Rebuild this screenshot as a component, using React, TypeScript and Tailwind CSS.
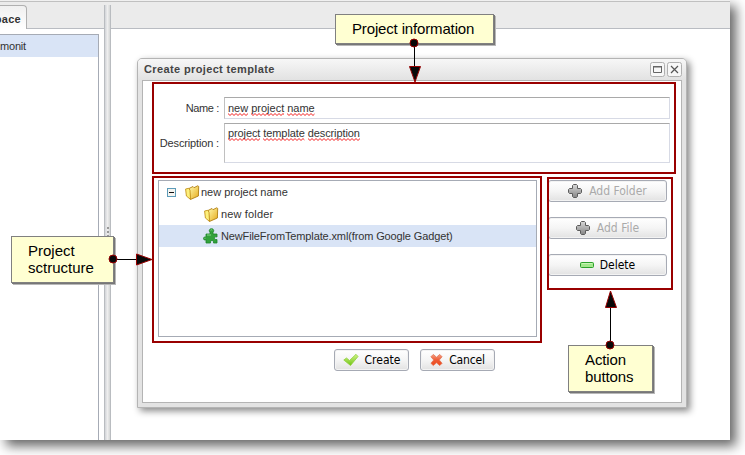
import type { ReactNode } from "react";

const PlusIcon = () => (
  <svg width="14" height="14" viewBox="0 0 14 14">
    <defs>
      <linearGradient id="plus" x1="0" y1="0" x2="0" y2="1">
        <stop offset="0" stopColor="#d8d8d8" />
        <stop offset="1" stopColor="#858585" />
      </linearGradient>
    </defs>
    <path d="M5.500 .5h3l1 1v3h3l1 1v3l-1 1h-3v3l-1 1h-3l-1-1v-3h-3l-1-1v-3l1-1h3v-3z" fill="url(#plus)" stroke="#5c5c5c" />
  </svg>
);

const MinusIcon = () => (
  <svg width="14" height="6" viewBox="0 0 14 6">
    <rect x=".5" y=".5" width="13" height="5" rx="1" fill="#a2e88c" stroke="#2ba12b" />
    <path d="M2 1.500h10" stroke="#c9f5b8" />
  </svg>
);

const CheckIcon = () => (
  <svg width="16" height="14" viewBox="0 0 16 14">
    <defs>
      <linearGradient id="check" x1="0" y1="0" x2="0" y2="1">
        <stop offset="0" stopColor="#d3f58a" />
        <stop offset="1" stopColor="#6fc414" />
      </linearGradient>
    </defs>
    <path d="M.8 7 3.500 5 6.500 7.500 13 1.300 15 3.500 7.500 12.500z" fill="url(#check)" stroke="#8fcf3a" strokeWidth=".8" strokeLinejoin="round" />
  </svg>
);

const CrossIcon = () => (
  <svg width="13" height="14" viewBox="0 0 14 14">
    <defs>
      <linearGradient id="cross" x1="0" y1="0" x2="0" y2="1">
        <stop offset="0" stopColor="#f6a083" />
        <stop offset=".5" stopColor="#ee5b35" />
        <stop offset="1" stopColor="#ee4a1c" />
      </linearGradient>
    </defs>
    <path d="M1 3.500 3.500 1 7 4 10.500 1 13 3.500 10 7 13 10.500 10.500 13 7 10 3.500 13 1 10.500 4 7z" fill="url(#cross)" stroke="#e0704f" strokeWidth=".8" strokeLinejoin="round" />
  </svg>
);

const FolderIcon = () => (
  <svg width="15" height="15" viewBox="0 0 15 15">
    <defs>
      <linearGradient id="folder" x1="0" y1="0" x2="1" y2="1">
        <stop offset="0" stopColor="#fffbb0" />
        <stop offset="1" stopColor="#e6a91a" />
      </linearGradient>
    </defs>
    <path d="M4 3.500 8 1.500l1 1.200 3.700-1.900 1 .6-.3 9.600-8 3.500z" fill="url(#folder)" stroke="#b07f14" strokeWidth=".9" strokeLinejoin="round" />
    <path d="M.6 4 3.800 3.300 5 5.200l.5 9.200L1.400 11z" fill="#fdf07c" stroke="#c4931c" strokeWidth=".9" strokeLinejoin="round" />
  </svg>
);

const PuzzleIcon = () => (
  <svg width="16" height="16" viewBox="0 0 16 16">
    <path
      d="M7 4.500C5.500 2.500 6.500 .7 8.500 .7s3 1.800 1.500 3.800v1.500h4v3c-1.800-.7-2.500.2-2.500 1.200s.8 1.800 2.500 1.300V15h-3.500c.3-1.500-.3-2.500-1.500-2.500S7.200 13.500 7.500 15H3v-3.300c-1.500.8-2.500 0-2.500-1.200S1.500 8.500 3 9.200V6h4z"
      fill="#32a23c"
      stroke="#1d8429"
      strokeWidth=".8"
    />
    <path d="M7.500 2.200q1-.8 1.800 0M4 7h4M1.500 10.200h1" stroke="#8bd78c" fill="none" />
  </svg>
);

function Button({ icon, label, className = "" }: { icon: ReactNode; label: string; className?: string }) {
  return (
    <button
      className={`flex h-[22px] items-center justify-center rounded-[3px] border border-[#a6aab4] bg-linear-to-b from-white via-[#f5f5f5] to-[#e2e2e2] font-['DejaVu_Sans_Condensed','DejaVu_Sans',sans-serif] text-[12px] leading-none font-stretch-condensed shadow-[inset_0_0_0_1px_#f3f3f3] ${className}`}
    >
      {icon}
      <span className="whitespace-nowrap">{label}</span>
    </button>
  );
}

function TreeRow({ children, className }: { children: ReactNode; className: string }) {
  return <div className={`flex h-[22px] items-center whitespace-nowrap ${className}`}>{children}</div>;
}

function Callout({ children, className }: { children: ReactNode; className: string }) {
  return (
    <div
      className={`absolute border border-[#808080] bg-[#ffffd2] pt-[5px] pl-[16px] text-[15px] leading-[17px] whitespace-nowrap text-black shadow-[1px_1px_0_#777,2px_2px_0_#b8b8b8] ${className}`}
    >
      {children}
    </div>
  );
}

/* Text with a spell-checker zigzag below each word. */
function Misspelled({ text, className = "" }: { text: string; className?: string }) {
  return (
    <span className={`flex gap-[3px] ${className}`}>
      {text.split(" ").map((word) => (
        <span key={word} className="relative leading-[14px]">
          {word}
          <svg className="absolute bottom-[-1px] left-0 h-[3px] w-full">
            <defs>
              <pattern id="zigzag" width="4" height="3" patternUnits="userSpaceOnUse">
                <path d="M-1 1.500 0 .5l2 2 2-2 1 1" fill="none" stroke="#f00000" strokeWidth=".9" />
              </pattern>
            </defs>
            <rect width="100%" height="3" fill="url(#zigzag)" />
          </svg>
        </span>
      ))}
    </span>
  );
}

export default function App() {
  return (
    <div className="relative h-[455px] w-[745px] overflow-hidden bg-white font-['Liberation_Sans',Arial,sans-serif] text-[11px] text-[#333]">
      <div className="relative flex h-[440px] w-[730px] flex-col bg-[#ebebeb] shadow-[6px_6px_11px_#666]">
        <div className="h-[2px] shrink-0 border-b border-[#c0c0c0] bg-[#f0f0f0]" />
        <div className="flex min-h-0 flex-1 pt-[3px]">
          <div className="flex w-[104px] flex-col">
            <div className="flex h-[24px]">
              <div className="z-10 flex h-[24px] w-[27px] items-center justify-end rounded-tr-[4px] border-t border-r border-[#b0b0b0] bg-linear-to-b from-[#f0f0f0] to-white pt-[4px] pr-[5px] font-bold tracking-[0.3px]">
                pace
              </div>
              <div className="flex-1 border-b border-[#b9bcc2]" />
            </div>
            <div className="flex-1 bg-white pt-[5px] pr-[5px]">
              <div className="h-full border-t border-r border-[#a6abb5]">
                <div className="flex h-[22px] items-center bg-[#d9e4f6] tracking-[-0.2px]">monit</div>
              </div>
            </div>
          </div>
          <div className="flex w-[7px] flex-col items-center justify-center gap-[2px] border-x border-[#b9bcc0] bg-linear-to-r from-[#d2d4d8] via-[#eee] to-[#d4d6d6] pt-[19px]">
            <i className="size-[2px] bg-[#999]" />
            <i className="size-[2px] bg-[#999]" />
            <i className="size-[2px] bg-[#999]" />
          </div>
          <div className="flex flex-1 flex-col">
            <div className="h-[24px] border-b border-[#b9bcc2]" />
            <div className="flex-1 bg-white" />
          </div>
        </div>
      </div>

      <section className="absolute top-[58px] left-[137px] flex h-[350px] w-[550px] flex-col rounded-t-[5px] border border-[#b4b4b4] bg-[#e3e3e3] px-[4px] pb-[4px] shadow-[3px_3px_7px_#888]">
        <header className="-mx-[4px] flex h-[21px] shrink-0 items-center rounded-t-[4px] bg-linear-to-b from-[#f7f7f7] to-[#e2e2e2] pr-[4px] pl-[6px]">
          <h1 className="flex-1 text-[11px] font-bold tracking-[0.37px] text-[#444]">Create project template</h1>
          <svg width="32" height="15" viewBox="0 0 32 15" fill="none">
            <rect x=".5" y=".5" width="14" height="14" rx="2" fill="#f7f7f7" stroke="#b0b0b0" />
            <rect x="17.500" y=".5" width="14" height="14" rx="2" fill="#f7f7f7" stroke="#b0b0b0" />
            <path d="M3.500 4v6.500h8V4M3 4.500h9" stroke="#666" />
            <path d="M3 5h9" stroke="#666" />
            <path d="m21 4 7 7m0-7-7 7" stroke="#555" strokeWidth="1.200" />
          </svg>
        </header>
        <div className="flex min-h-0 flex-1 flex-col border border-[#b4b4b4] bg-white">
          <div className="grid grid-cols-[76px_446px] items-center gap-x-[5px] gap-y-[4px] pt-[16px]">
            <label className="text-right tracking-[-0.35px]">Name :</label>
            <div className="flex h-[22px] items-center border border-[#d7dae5] border-t-[#a9a9a9] border-l-[#c0c0c0] pl-[3px]">
              <Misspelled text="new project name" />
            </div>
            <label className="text-right tracking-[-0.15px]">Description :</label>
            <div className="h-[40px] border border-[#d7dae5] border-t-[#a9a9a9] border-l-[#c0c0c0] pt-[2px] pl-[3px]">
              <Misspelled text="project template description" className="tracking-[-0.1px]" />
            </div>
          </div>
          <div className="flex gap-[11px] pt-[17px] pl-[15px]">
            <div className="h-[157px] w-[379px] border border-[#a6abb5]">
              <TreeRow className="pl-[8px]">
                <svg width="9" height="9" viewBox="0 0 9 9" className="mr-[9px]">
                  <rect x=".5" y=".5" width="8" height="8" fill="#f4f4f0" stroke="#5c9bb9" />
                  <path d="M2 4.500h5" stroke="#111" />
                </svg>
                <FolderIcon />
                <span className="ml-[1px]">new project name</span>
              </TreeRow>
              <TreeRow className="pl-[45px]">
                <FolderIcon />
                <span className="ml-[2px] tracking-[0.15px]">new folder</span>
              </TreeRow>
              <TreeRow className="bg-[#d9e4f6] pl-[44px]">
                <PuzzleIcon />
                <span className="ml-[2px] tracking-[-0.13px]">NewFileFromTemplate.xml(from Google Gadget)</span>
              </TreeRow>
            </div>
            <div className="flex w-[119px] flex-col gap-[15px]">
              <Button icon={<PlusIcon />} label="Add Folder" className="gap-[7px] text-[#aaa]" />
              <Button icon={<PlusIcon />} label="Add File" className="gap-[7px] text-[#aaa]" />
              <Button icon={<MinusIcon />} label="Delete" className="gap-[6px] text-black" />
            </div>
          </div>
          <div className="flex gap-[11px] pt-[12px] pl-[191px]">
            <Button icon={<CheckIcon />} label="Create" className="w-[75px] gap-[6px] text-black" />
            <Button icon={<CrossIcon />} label="Cancel" className="w-[75px] gap-[6px] tracking-[-0.15px] text-black" />
          </div>
        </div>
      </section>

      <div className="absolute top-[82px] left-[152px] h-[92px] w-[524px] border-2 border-[#990000]" />
      <div className="absolute top-[176px] left-[152px] h-[167px] w-[390px] border-2 border-[#990000]" />
      <div className="absolute top-[177px] left-[547px] h-[113px] w-[126px] border-2 border-[#990000]" />

      <Callout className="top-[14px] left-[335px] h-[30px] w-[159px] tracking-[-0.15px]">Project information</Callout>
      <Callout className="top-[236px] left-[11px] h-[47px] w-[103px]">
        Project
        <br />
        sctructure
      </Callout>
      <Callout className="top-[345px] left-[568px] h-[47px] w-[85px] tracking-[-0.1px]">
        Action
        <br />
        buttons
      </Callout>

      <svg className="absolute inset-0" width="745" height="455" fill="#080808" stroke="#900" strokeWidth="1">
        <path d="M414.500 43v25M113 259.500h25M610.500 345v-40" stroke="#000" />
        <circle cx="414" cy="43" r="4" />
        <path d="M409.500 66.500h11l-5.500 15.500z" />
        <circle cx="113" cy="259" r="4" />
        <path d="M136.500 254v11l15.500-5.500z" />
        <circle cx="610" cy="345" r="4" />
        <path d="M605.500 307.500h11l-6-16.500z" />
      </svg>
    </div>
  );
}
